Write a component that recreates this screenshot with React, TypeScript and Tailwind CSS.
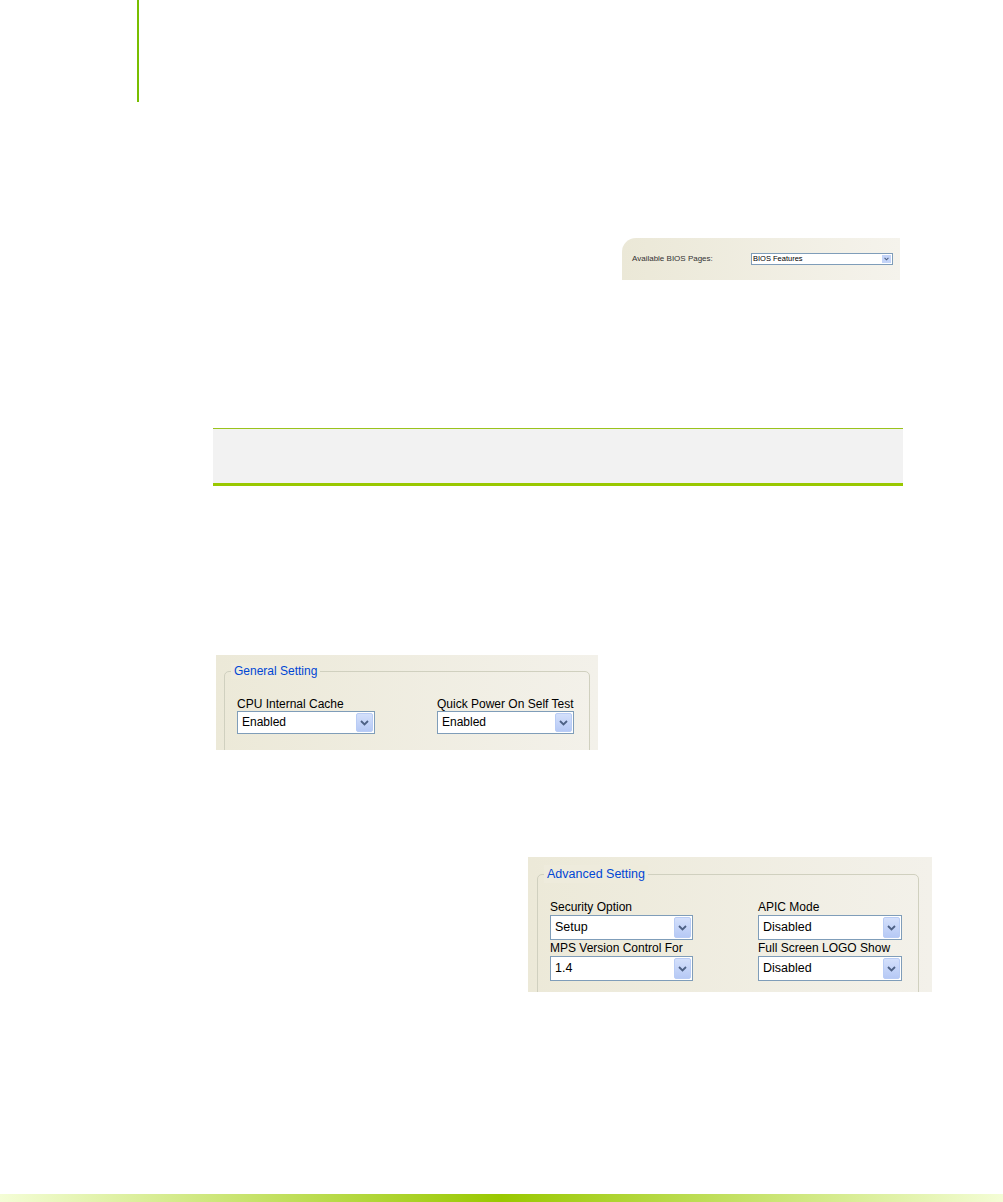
import React from "react";

function Chevron() {
  return (
    <svg width="9" height="6" viewBox="0 0 9 6" fill="none">
      <path d="M1 1l3.5 3.5L8 1" stroke="#4d6185" strokeWidth={1.8} />
    </svg>
  );
}

function XpSelect({ value, width, big }: { value: string; width: string; big?: boolean }) {
  return (
    <div
      className={`flex ${big ? "h-[25px]" : "h-[23px]"} ${width} items-stretch border border-[#7f9db9] bg-white p-[1px]`}
    >
      <span
        className={`flex-1 truncate whitespace-nowrap pl-[3px] text-black ${big ? "text-[12.5px] leading-[21px]" : "text-[12px] leading-[19px]"}`}
      >
        {value}
      </span>
      <span className="flex w-[17px] items-center justify-center rounded-[2px] border border-[#b9ccf5] bg-gradient-to-b from-[#d4e0fb] to-[#b6c9f5]">
        <Chevron />
      </span>
    </div>
  );
}

function Field({ label, value, width, big }: { label: string; value: string; width: string; big?: boolean }) {
  return (
    <div className="flex flex-col">
      <span
        className={`whitespace-nowrap text-black ${big ? "text-[12px] leading-[16px]" : "text-[12px] leading-[14px]"}`}
      >
        {label}
      </span>
      <XpSelect value={value} width={width} big={big} />
    </div>
  );
}

export default function App() {
  return (
    <div className="relative h-[1202px] w-[1003px] overflow-hidden bg-white font-['Liberation_Sans',Arial,sans-serif]">
      {/* top vertical rule */}
      <div className="ml-[137px] h-[102px] w-[2px] bg-[#78be00]" />

      {/* BIOS pages picker */}
      <div className="ml-[622px] mt-[136px] flex h-[42px] w-[278px] items-center rounded-tl-[14px] bg-gradient-to-r from-[#ebe8d7] to-[#f5f3ec] pl-[10px]">
        <span className="w-[119px] whitespace-nowrap text-[8px] text-[#333]">Available BIOS Pages:</span>
        <div className="flex h-[12px] w-[142px] items-stretch border border-[#7f9db9] bg-white">
          <span className="flex-1 pl-[1px] text-[7.5px] leading-[10px] text-black">BIOS Features</span>
          <span className="m-[1px] flex w-[9px] items-center justify-center bg-[#c4d4f8]">
            <svg width="5" height="4" viewBox="0 0 9 6" fill="none">
              <path d="M1 1l3.5 3.5L8 1" stroke="#4d6185" strokeWidth={2} />
            </svg>
          </span>
        </div>
      </div>

      {/* grey note box */}
      <div className="ml-[213px] mt-[148px] h-[58px] w-[690px] border-t border-b-[3px] border-t-[#9ac31c] border-b-[#99c800] bg-[#f2f2f2]" />

      {/* General Setting */}
      <div className="ml-[216px] mt-[169px] h-[95px] w-[382px] overflow-hidden bg-gradient-to-r from-[#ece9d8] to-[#f3f1ea] px-[8px] pt-[16px]">
        <div className="relative h-[100px] rounded-[5px] border border-[#d0d0bf]">
          <span className="absolute left-[6px] top-[-9px] bg-[#eeebdc] px-[3px] text-[12px] leading-[16px] text-[#0046d5]">
            General Setting
          </span>
          <div className="flex pl-[12px] pt-[25px]">
            <Field label="CPU Internal Cache" value="Enabled" width="w-[138px]" />
            <div className="ml-[62px]">
              <Field label="Quick Power On Self Test" value="Enabled" width="w-[137px]" />
            </div>
          </div>
        </div>
      </div>

      {/* Advanced Setting */}
      <div className="ml-[528px] mt-[107px] h-[135px] w-[404px] overflow-hidden bg-gradient-to-r from-[#ece9d8] to-[#f3f1ea] pl-[9px] pr-[13px] pt-[17px]">
        <div className="relative h-[140px] rounded-[5px] border border-[#d0d0bf]">
          <span className="absolute left-[6px] top-[-10px] bg-[#eeebdc] px-[3px] text-[12.5px] leading-[18px] text-[#0046d5]">
            Advanced Setting
          </span>
          <div className="grid grid-cols-[143px_144px] gap-x-[65px] pl-[12px] pt-[24px]">
            <Field label="Security Option" value="Setup" width="w-[143px]" big />
            <Field label="APIC Mode" value="Disabled" width="w-[144px]" big />
            <Field label="MPS Version Control For" value="1.4" width="w-[143px]" big />
            <Field label="Full Screen LOGO Show" value="Disabled" width="w-[144px]" big />
          </div>
        </div>
      </div>

      {/* bottom gradient bar */}
      <div className="mt-[202px] h-[8px] w-full bg-[linear-gradient(to_right,#f4fdd6,#99c800_50%,#f4fdd6)]" />
    </div>
  );
}
